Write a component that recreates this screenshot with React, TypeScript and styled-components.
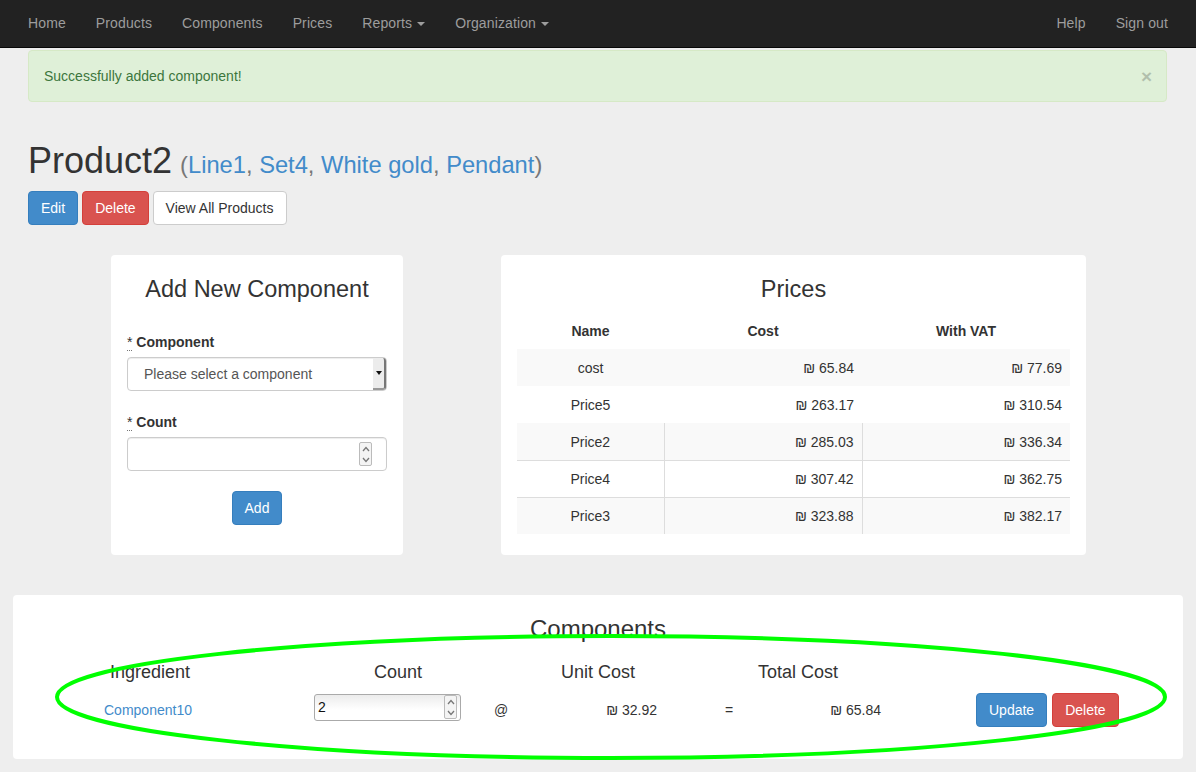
import React from "react";
import styled, { createGlobalStyle } from "styled-components";

const GlobalStyle = createGlobalStyle`
  html, body { margin: 0; padding: 0; }
  body {
    background: #eeeeee;
    font-family: "Liberation Sans", Arial, Helvetica, sans-serif;
    font-size: 14px;
    line-height: 20px;
    color: #333333;
  }
  * { box-sizing: border-box; }
`;

const Page = styled.div`
  position: relative;
  width: 1196px;
  min-height: 772px;
  overflow: hidden;
`;

const Navbar = styled.nav`
  height: 48px;
  background: #222222;
  border-bottom: 1px solid #080808;
  display: flex;
  align-items: flex-start;
  justify-content: space-between;
  padding: 0 13px;
`;

const NavGroup = styled.div`
  display: flex;
  align-items: center;
`;

const NavLink = styled.a`
  display: flex;
  align-items: center;
  gap: 5px;
  padding: 0 15px;
  line-height: 46px;
  color: #9d9d9d;
  text-decoration: none;
  font-size: 14px;
  letter-spacing: 0.12px;
`;

const Caret = styled.span`
  display: inline-block;
  width: 0;
  height: 0;
  border-top: 4px solid #9d9d9d;
  border-left: 4px solid transparent;
  border-right: 4px solid transparent;
  margin-top: 1px;
`;

const Container = styled.div`
  padding: 0 29px 0 28px;
`;

const Alert = styled.div`
  margin-top: 2px;
  padding: 15px;
  border: 1px solid #d6e9c6;
  border-radius: 4px;
  background: #dff0d8;
  color: #3c763d;
  display: flex;
  justify-content: space-between;
  align-items: center;
`;

const Close = styled.span`
  font-size: 19px;
  font-weight: bold;
  color: #000;
  opacity: 0.2;
  line-height: 20px;
  margin-right: -1px;
  transform: translateY(1px);
`;

const Title = styled.h1`
  margin: 39px 0 10px;
  font-size: 36px;
  font-weight: 500;
  line-height: 1.1;
  color: #333;
`;

const TitleSmall = styled.small`
  font-size: 23.7px;
  color: #777777;
  font-weight: normal;
  margin-left: 8px;
`;

const Link = styled.a`
  color: #428bca;
  text-decoration: none;
`;

const ButtonRow = styled.div`
  display: flex;
  gap: 4px;
`;

const Button = styled.button<{ $variant: "primary" | "danger" | "default" }>`
  height: 34px;
  padding: 6px 12px;
  font-family: inherit;
  font-size: 14px;
  line-height: 20px;
  border-radius: 4px;
  border: 1px solid
    ${(p) => (p.$variant === "primary" ? "#357ebd" : p.$variant === "danger" ? "#d43f3a" : "#cccccc")};
  background: ${(p) => (p.$variant === "primary" ? "#428bca" : p.$variant === "danger" ? "#d9534f" : "#ffffff")};
  color: ${(p) => (p.$variant === "default" ? "#333333" : "#ffffff")};
  cursor: pointer;
`;

const PanelRow = styled.div`
  display: flex;
  align-items: stretch;
  margin-top: 30px;
  padding-left: 83px;
  gap: 98px;
`;

const Panel = styled.section<{ $width: number }>`
  width: ${(p) => p.$width}px;
  background: #ffffff;
  border-radius: 4px;
  padding: 22px 16px 21px;
  display: flex;
  flex-direction: column;
`;

const PanelTitle = styled.h3<{ $size?: number }>`
  margin: 0;
  font-size: ${(p) => p.$size ?? 23.5}px;
  font-weight: 500;
  line-height: 1.1;
  text-align: center;
  color: #333;
`;

const FormGroup = styled.div<{ $mt: number }>`
  margin-top: ${(p) => p.$mt}px;
  display: flex;
  flex-direction: column;
`;

const Label = styled.label`
  font-weight: bold;
  margin-bottom: 5px;
  line-height: 20px;
`;

const Abbr = styled.abbr`
  font-weight: normal;
  text-decoration: none;
  border-bottom: 1px dotted #777;
  cursor: help;
`;

const SelectBox = styled.div`
  height: 34px;
  border: 1px solid #cccccc;
  border-radius: 4px;
  box-shadow: inset 0 1px 1px rgba(0, 0, 0, 0.075);
  display: flex;
  align-items: center;
  justify-content: space-between;
  padding: 0 0 0 16px;
  color: #555555;
  background: #fff;
`;

const SelectArrow = styled.span`
  width: 13px;
  height: 32px;
  background: #ececec;
  border-right: 2px solid #777;
  border-bottom: 2px solid #999;
  border-radius: 0 3px 3px 0;
  display: flex;
  align-items: center;
  justify-content: center;
  &::after {
    content: "";
    border-top: 4px solid #111;
    border-left: 3px solid transparent;
    border-right: 3px solid transparent;
  }
`;

const InputBox = styled.div`
  height: 34px;
  border: 1px solid #cccccc;
  border-radius: 4px;
  box-shadow: inset 0 1px 1px rgba(0, 0, 0, 0.075);
  display: flex;
  align-items: center;
  justify-content: flex-end;
  padding-right: 14px;
  background: #fff;
`;

const SmallInput = styled.div`
  width: 147px;
  height: 27px;
  margin: 1px 0 0 16px;
  border: 1px solid #aaaaaa;
  border-radius: 3px;
  background: linear-gradient(to bottom, #ececec 0%, #ffffff 60%);
  display: flex;
  align-items: center;
  justify-content: space-between;
  padding: 0 3px 0 3px;
  font-size: 14px;
  color: #111;
`;

const Spinner = styled.span`
  width: 13px;
  height: 24px;
  border: 1px solid #bbbbbb;
  border-radius: 2px;
  background: #f4f4f4;
  display: flex;
  flex-direction: column;
  align-items: center;
  justify-content: space-around;
`;

const CenterRow = styled.div`
  display: flex;
  justify-content: center;
  margin-top: 20px;
`;

const Table = styled.table`
  margin-top: 10px;
  width: 100%;
  border-collapse: collapse;
`;

const Th = styled.th`
  height: 37px;
  padding: 8px;
  font-weight: bold;
  text-align: center;
`;

const Tr = styled.tr<{ $striped: boolean; $topline: boolean }>`
  background: ${(p) => (p.$striped ? "#f9f9f9" : "transparent")};
  border-top: ${(p) => (p.$topline ? "1px solid #dddddd" : "none")};
`;

const Td = styled.td<{ $align: "center" | "right"; $vline: boolean }>`
  height: 37px;
  padding: 8px;
  text-align: ${(p) => p.$align};
  border-left: ${(p) => (p.$vline ? "1px solid #dddddd" : "none")};
`;

const WidePanel = styled.section`
  margin: 40px 13px 0;
  background: #fff;
  border-radius: 4px;
  padding: 21px 0 32px;
`;

const CompHeader = styled.div`
  display: grid;
  grid-template-columns: 200px 200px 200px 200px;
  margin: 19px 0 0 85px;
  font-size: 18px;
  line-height: 20px;
`;

const HeadCell = styled.div<{ $left?: boolean }>`
  text-align: ${(p) => (p.$left ? "left" : "center")};
  padding-left: ${(p) => (p.$left ? "12px" : "0")};
`;

const CompRow = styled.div`
  display: grid;
  grid-template-columns: 200px 178px 50px 140px 126px 98px auto;
  align-items: center;
  margin: 11px 0 0 85px;
  height: 34px;
`;

const Cell = styled.div<{ $align: "left" | "center" | "right"; $pad?: string }>`
  text-align: ${(p) => p.$align};
  padding: ${(p) => p.$pad ?? "0"};
`;

const InputCell = styled.div`
  align-self: start;
`;

const RowButtons = styled.div`
  display: flex;
  gap: 5px;
  padding-left: 86px;
`;

const Annotation = styled.svg`
  position: absolute;
  left: 0;
  top: 0;
  pointer-events: none;
`;

const Chevron = ({ up }: { up: boolean }) => (
  <svg width="8" height="6" viewBox="0 0 8 6">
    <path
      d={up ? "M1 5 L4 1.5 L7 5" : "M1 1 L4 4.5 L7 1"}
      fill="none"
      stroke="#777"
      strokeWidth="1.3"
    />
  </svg>
);

const NumberSpinner = () => (
  <Spinner>
    <Chevron up />
    <Chevron up={false} />
  </Spinner>
);

const prices = [
  { name: "cost", cost: "₪ 65.84", vat: "₪ 77.69" },
  { name: "Price5", cost: "₪ 263.17", vat: "₪ 310.54" },
  { name: "Price2", cost: "₪ 285.03", vat: "₪ 336.34" },
  { name: "Price4", cost: "₪ 307.42", vat: "₪ 362.75" },
  { name: "Price3", cost: "₪ 323.88", vat: "₪ 382.17" },
];

export default function App() {
  return (
    <Page>
      <GlobalStyle />
      <Navbar>
        <NavGroup>
          <NavLink>Home</NavLink>
          <NavLink>Products</NavLink>
          <NavLink>Components</NavLink>
          <NavLink>Prices</NavLink>
          <NavLink>
            Reports <Caret />
          </NavLink>
          <NavLink>
            Organization <Caret />
          </NavLink>
        </NavGroup>
        <NavGroup>
          <NavLink>Help</NavLink>
          <NavLink>Sign out</NavLink>
        </NavGroup>
      </Navbar>

      <Container>
        <Alert>
          <span>Successfully added component!</span>
          <Close>×</Close>
        </Alert>

        <Title>
          Product2
          <TitleSmall>
            (<Link>Line1</Link>, <Link>Set4</Link>, <Link>White gold</Link>, <Link>Pendant</Link>)
          </TitleSmall>
        </Title>

        <ButtonRow>
          <Button $variant="primary">Edit</Button>
          <Button $variant="danger">Delete</Button>
          <Button $variant="default">View All Products</Button>
        </ButtonRow>

        <PanelRow>
          <Panel $width={292}>
            <PanelTitle>Add New Component</PanelTitle>
            <FormGroup $mt={30}>
              <Label>
                <Abbr title="required">*</Abbr> Component
              </Label>
              <SelectBox>
                <span>Please select a component</span>
                <SelectArrow />
              </SelectBox>
            </FormGroup>
            <FormGroup $mt={21}>
              <Label>
                <Abbr title="required">*</Abbr> Count
              </Label>
              <InputBox>
                <NumberSpinner />
              </InputBox>
            </FormGroup>
            <CenterRow>
              <Button $variant="primary">Add</Button>
            </CenterRow>
          </Panel>

          <Panel $width={585}>
            <PanelTitle>Prices</PanelTitle>
            <Table>
              <colgroup>
                <col style={{ width: "147px" }} />
                <col style={{ width: "198px" }} />
                <col style={{ width: "208px" }} />
              </colgroup>
              <thead>
                <tr>
                  <Th>Name</Th>
                  <Th>Cost</Th>
                  <Th>With VAT</Th>
                </tr>
              </thead>
              <tbody>
                {prices.map((r, i) => (
                  <Tr key={r.name} $striped={i % 2 === 0} $topline={i >= 3}>
                    <Td $align="center" $vline={false}>
                      {r.name}
                    </Td>
                    <Td $align="right" $vline={i >= 2}>
                      {r.cost}
                    </Td>
                    <Td $align="right" $vline={i >= 2}>
                      {r.vat}
                    </Td>
                  </Tr>
                ))}
              </tbody>
            </Table>
          </Panel>
        </PanelRow>
      </Container>

      <WidePanel>
        <PanelTitle $size={24}>Components</PanelTitle>
        <CompHeader>
          <HeadCell $left>Ingredient</HeadCell>
          <HeadCell>Count</HeadCell>
          <HeadCell>Unit Cost</HeadCell>
          <HeadCell>Total Cost</HeadCell>
        </CompHeader>
        <CompRow>
          <Cell $align="left" $pad="0 0 0 6px">
            <Link>Component10</Link>
          </Cell>
          <InputCell>
            <SmallInput>
              <span>2</span>
              <NumberSpinner />
            </SmallInput>
          </InputCell>
          <Cell $align="center">@</Cell>
          <Cell $align="right" $pad="0 9px 0 0">
            ₪ 32.92
          </Cell>
          <Cell $align="center">=</Cell>
          <Cell $align="right" $pad="0 9px 0 0">
            ₪ 65.84
          </Cell>
          <RowButtons>
            <Button $variant="primary">Update</Button>
            <Button $variant="danger">Delete</Button>
          </RowButtons>
        </CompRow>
      </WidePanel>

      <Annotation width="1196" height="772" viewBox="0 0 1196 772">
        <ellipse cx="611" cy="697" rx="554" ry="61" fill="none" stroke="#00ff00" strokeWidth="4" />
      </Annotation>
    </Page>
  );
}
